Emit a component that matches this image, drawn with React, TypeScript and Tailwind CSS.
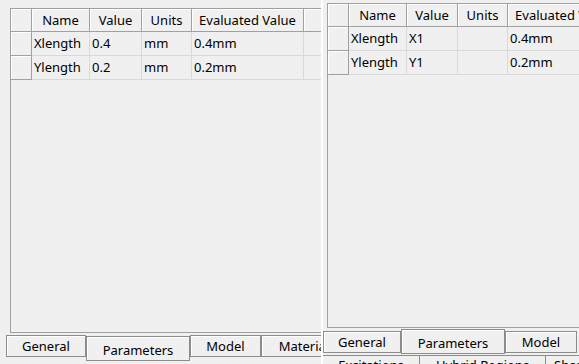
import React from 'react';

type Row = { name: string; value: string; units: string; evaluated: string };

const leftRows: Row[] = [
    { name: 'Xlength', value: '0.4', units: 'mm', evaluated: '0.4mm' },
    { name: 'Ylength', value: '0.2', units: 'mm', evaluated: '0.2mm' },
];

const rightRows: Row[] = [
    { name: 'Xlength', value: 'X1', units: '', evaluated: '0.4mm' },
    { name: 'Ylength', value: 'Y1', units: '', evaluated: '0.2mm' },
];

const hdr =
    'h-[23px] shrink-0 border-r border-b border-[#a0a0a0] bg-[#f0f0f0] shadow-[inset_1px_1px_0_#ffffff] flex items-center justify-center';
const cell = 'h-[24px] shrink-0 border-r border-b border-[#d9d9d9] flex items-center pl-[2px]';
const rowHdr =
    'h-[24px] shrink-0 border-r border-b border-[#a0a0a0] bg-[#f0f0f0] shadow-[inset_1px_1px_0_#ffffff]';

function ParamTable({ rows, widths }: { rows: Row[]; widths: number[] }) {
    const [wh, wn, wv, wu, we] = widths;
    return (
        <div className="flex flex-col">
            {/* Header */}
            <div className="flex">
                <div className={hdr} style={{ width: wh }} />
                <div className={hdr} style={{ width: wn }}>Name</div>
                <div className={hdr} style={{ width: wv }}>Value</div>
                <div className={hdr} style={{ width: wu }}>Units</div>
                <div className={hdr} style={{ width: we }}>Evaluated Value</div>
                <div className={hdr + ' w-[40px]'} />
            </div>
            {rows.map((r) => (
                <div key={r.name} className="flex">
                    <div className={rowHdr} style={{ width: wh }} />
                    <div className={cell} style={{ width: wn }}>{r.name}</div>
                    <div className={cell} style={{ width: wv }}>{r.value}</div>
                    <div className={cell} style={{ width: wu }}>{r.units}</div>
                    <div className={cell} style={{ width: we }}>{r.evaluated}</div>
                    <div className={cell + ' w-[40px]'} />
                </div>
            ))}
        </div>
    );
}

function Tab({ label, width, selected, top }: { label: string; width: number; selected?: boolean; top: number }) {
    return (
        <div
            className={
                'shrink-0 border border-[#8c8c8c] bg-[#f0f0f0] shadow-[inset_1px_1px_0_#ffffff] flex justify-center whitespace-nowrap overflow-hidden ' +
                (selected ? 'h-[25px] items-end pb-[3px]' : 'h-[22px] items-center')
            }
            style={{ width, marginTop: top }}
        >
            {label}
        </div>
    );
}

export default function App() {
    return (
        <div className="w-[579px] h-[364px] overflow-hidden flex bg-white text-[13px] text-black font-['Noto_Sans','Liberation_Sans',sans-serif] leading-none">
            {/* Left window */}
            <div className="w-[321px] shrink-0 h-full bg-[#f0f0f0] flex flex-col overflow-hidden">
                <div className="pt-[8px] pl-[10px]">
                    <div className="h-[325px] border-l border-t border-b border-[#a0a0a0] overflow-hidden">
                        <ParamTable rows={leftRows} widths={[21, 58, 52, 50, 112]} />
                    </div>
                </div>
                <div className="flex pl-[6px]">
                    <Tab label="General" width={80} top={2} />
                    <Tab label="Parameters" width={104} top={3} selected />
                    <Tab label="Model" width={71} top={2} />
                    <Tab label="Material" width={86} top={2} />
                </div>
            </div>

            {/* Right window */}
            <div className="ml-[2px] flex-1 h-full bg-[#f0f0f0] flex flex-col overflow-hidden">
                <div className="pt-[3px] pl-[4px]">
                    <div className="h-[325px] border-l border-t border-b border-[#a0a0a0] overflow-hidden">
                        <ParamTable rows={rightRows} widths={[21, 58, 51, 50, 112]} />
                    </div>
                </div>
                <div className="flex h-[27px] shrink-0 items-start">
                    <Tab label="General" width={78} top={3} />
                    <Tab label="Parameters" width={104} top={1} selected />
                    <Tab label="Model" width={72} top={3} />
                </div>
                <div className="flex border-t border-[#8c8c8c] shrink-0">
                    <div className="w-[97px] shrink-0 h-[20px] border-r border-[#8c8c8c] flex justify-center pt-[3px]">Excitations</div>
                    <div className="w-[126px] shrink-0 h-[20px] border-r border-[#8c8c8c] flex justify-center pt-[3px]">Hybrid Regions</div>
                    <div className="flex-1 h-[20px] pl-[8px] pt-[3px] whitespace-nowrap">Shapes</div>
                </div>
            </div>
        </div>
    );
}
